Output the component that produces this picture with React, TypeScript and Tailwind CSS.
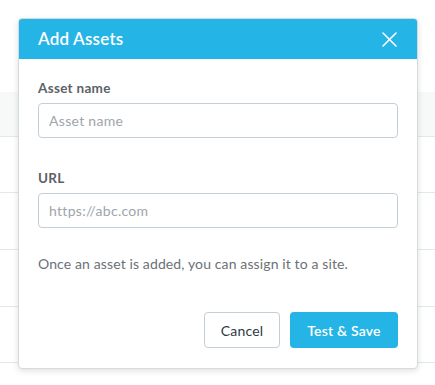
import React from "react";

export default function App() {
  const font = { fontFamily: "Lato, 'Open Sans', sans-serif" };
  return (
    <div className="relative w-[435px] h-[385px] bg-white overflow-hidden" style={font}>
      {/* background page table */}
      <div className="flex flex-col pt-[92px]">
        <div className="h-[45px] bg-[#f7f8f8] border-b border-[#e3e8eb]" />
        <div className="h-[56px] border-b border-[#e3e8eb]" />
        <div className="h-[57px] border-b border-[#e3e8eb]" />
        <div className="h-[57px] border-b border-[#e3e8eb]" />
        <div className="h-[56px] border-b border-[#e3e8eb]" />
      </div>

      {/* modal */}
      <div className="absolute left-[18px] top-[18px] w-[400px] h-[351px] bg-white rounded-[4px] border border-[#d3dae0] shadow-[0_2px_6px_rgba(0,0,0,0.12)] overflow-hidden flex flex-col">
        <div className="h-10 bg-[#25b4e6] flex items-center justify-between pl-[19px] pr-[19px] shrink-0">
          <span className="text-white text-[17px] font-semibold tracking-[0.2px]">Add Assets</span>
          <svg width="15" height="15" viewBox="0 0 15 15" className="mr-[1px]">
            <path d="M1 1 L14 14 M14 1 L1 14" stroke="white" strokeWidth="1.6" strokeLinecap="round" />
          </svg>
        </div>
        <div className="flex flex-col px-[19px] pt-[19px] pb-5 flex-1">
          <label className="h-5 leading-5 text-[13.5px] font-bold text-[#5b6167] mb-[5px] tracking-[0.3px]">Asset name</label>
          <input
            className="h-[35px] w-full rounded-[4px] border border-[#c3ced6] px-[10px] text-[14px] tracking-[0.3px] text-[#333] placeholder:text-[#9ea5ab] outline-none"
            placeholder="Asset name"
            style={font}
          />
          <label className="mt-[30px] h-5 leading-5 text-[13.5px] font-bold text-[#5b6167] mb-[5px] tracking-[0.3px]">URL</label>
          <input
            className="h-[35px] w-full rounded-[4px] border border-[#c3ced6] px-[10px] text-[14px] tracking-[0.3px] text-[#333] placeholder:text-[#9ea5ab] outline-none"
            placeholder="https://abc.com"
            style={font}
          />
          <p className="mt-[26px] h-5 leading-5 text-[14px] tracking-[0.12px] text-[#6b7177]">
            Once an asset is added, you can assign it to a site.
          </p>
          <div className="mt-auto flex justify-end gap-[10px]">
            <button className="h-9 w-[76px] rounded-[4px] border border-[#c3ced6] bg-white text-[14px] tracking-[0.2px] text-[#2e3944]">
              Cancel
            </button>
            <button className="h-9 w-[108px] rounded-[4px] bg-[#25b4e6] text-[14px] tracking-[0.2px] font-semibold text-white">
              Test &amp; Save
            </button>
          </div>
        </div>
      </div>
    </div>
  );
}
